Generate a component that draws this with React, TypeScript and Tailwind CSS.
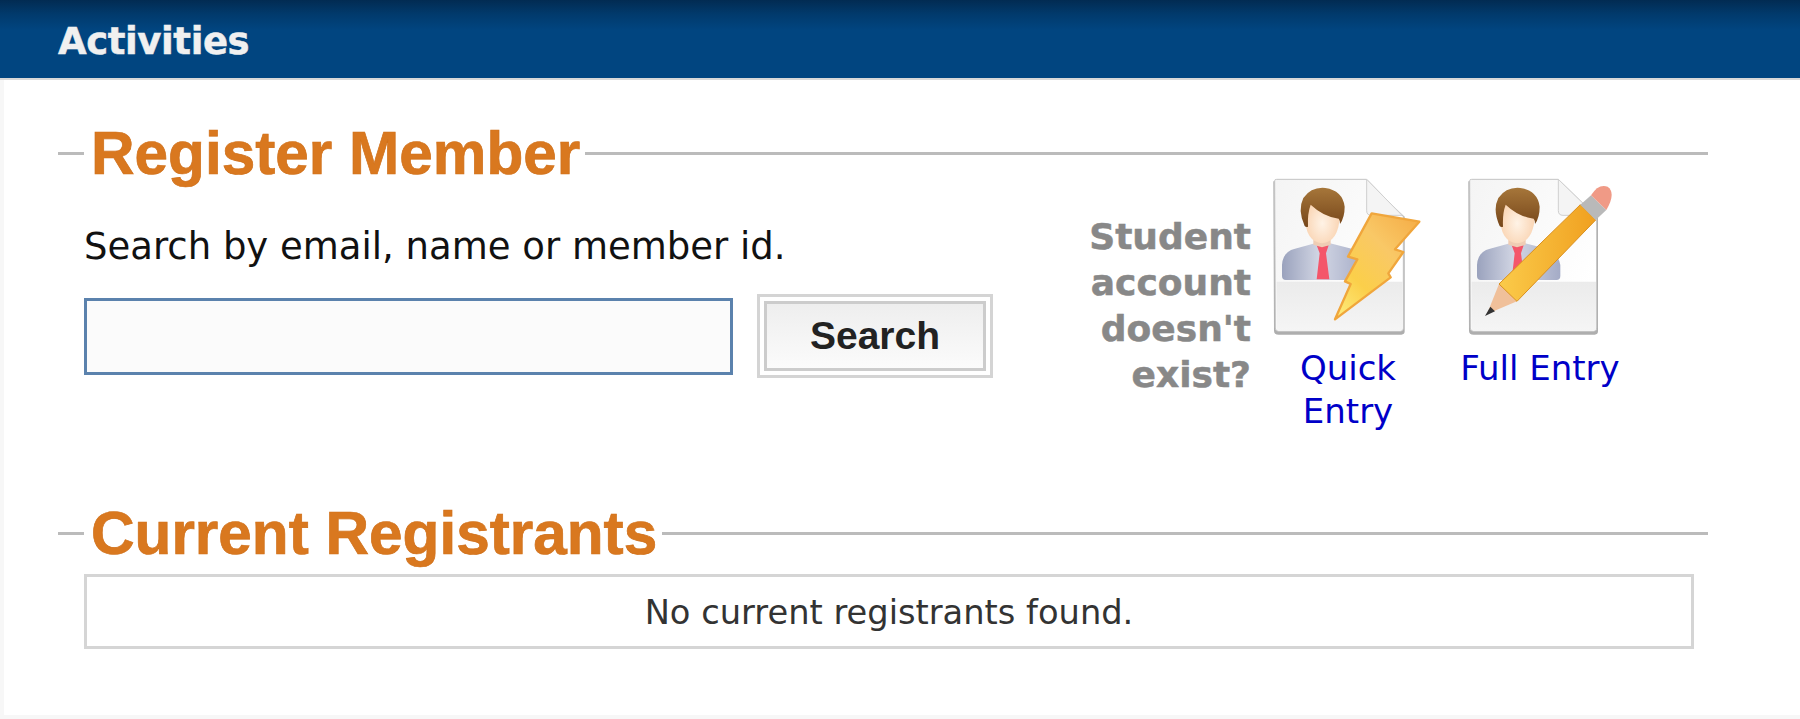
function SectionTitle({ title }: { title: string }) {
  return (
    <div className="flex items-center h-[60px]">
      <div className="w-[26px] h-[3px] bg-[#bbbbbb]" />
      <h2 className="pl-[7px] pr-[5px] text-[60.3px] leading-[60px] font-bold text-[#d9781f] [-webkit-text-stroke:0.7px_#d0701a] font-['Liberation_Sans',sans-serif] whitespace-nowrap">
        {title}
      </h2>
      <div className="flex-1 h-[3px] bg-[#bbbbbb]" />
    </div>
  );
}

function Person({ docRight, foldX }: { docRight: number; foldX: number }) {
  return (
    <>
      <path
        d={`M40 34H${foldX}L${docRight + 4} 140V484Q${docRight + 4} 494 ${docRight - 6} 494H56Q42 494 42 482Z`}
        fill="#8c8c8c"
        opacity="0.7"
      />
      <path
        d={`M44 32Q44 28 50 28H${foldX}L${docRight} 140V474Q${docRight} 484 ${docRight - 10} 484H56Q46 484 46 474Z`}
        fill="url(#sheet)"
        stroke="#c4c4c4"
        strokeWidth="3"
      />
      <path
        d={`M50 335H${docRight - 2}V474Q${docRight - 2} 482 ${docRight - 10} 482H58Q50 482 50 474Z`}
        fill="url(#lower)"
      />
      <path
        d={`M${foldX} 28V122Q${foldX} 136 ${foldX + 14} 136H${docRight - 4}Z`}
        fill="#f4f4f4"
        stroke="#cfcfcf"
        strokeWidth="3"
      />
      <path
        d="M66 318V285Q68 245 105 236L165 220H210L275 236Q308 245 316 285V318Q316 330 304 330H78Q66 330 66 318Z"
        fill="url(#suit)"
      />
      <path d="M170 226H206L198 250L208 328H170L179 250Z" fill="#f4566a" />
      <path d="M160 195H212V224L186 232L160 224Z" fill="#efcdb4" />
      <path d="M134 135Q136 216 186 220Q236 216 240 135Q238 70 186 70Q134 70 134 135Z" fill="url(#skin)" />
      <path
        d="M134 168Q112 120 130 84Q154 50 196 54Q248 62 254 110Q254 142 240 162Q240 150 236 146Q190 140 152 104Q142 130 144 170Q138 172 134 168Z"
        fill="url(#hair)"
      />
    </>
  );
}

function IconDefs() {
  return (
    <defs>
      <linearGradient id="sheet" x1="0" y1="0" x2="1" y2="0.6">
        <stop offset="0" stopColor="#f4f4f4" />
        <stop offset="1" stopColor="#ffffff" />
      </linearGradient>
      <linearGradient id="lower" x1="0" y1="0" x2="0" y2="1">
        <stop offset="0" stopColor="#ebebeb" />
        <stop offset="1" stopColor="#f5f5f5" />
      </linearGradient>
      <linearGradient id="suit" x1="0" y1="0" x2="1" y2="0">
        <stop offset="0" stopColor="#9aa2bd" />
        <stop offset="0.45" stopColor="#d2d6e4" />
        <stop offset="1" stopColor="#a4abc6" />
      </linearGradient>
      <radialGradient id="skin" cx="0.5" cy="0.6" r="0.65">
        <stop offset="0" stopColor="#fff3e6" />
        <stop offset="1" stopColor="#f8cba4" />
      </radialGradient>
      <linearGradient id="hair" x1="0" y1="0" x2="0" y2="1">
        <stop offset="0" stopColor="#a6763a" />
        <stop offset="1" stopColor="#76461a" />
      </linearGradient>
      <linearGradient id="bolt" x1="0.9" y1="0" x2="0.1" y2="1">
        <stop offset="0" stopColor="#f5ae48" />
        <stop offset="0.35" stopColor="#f9c866" />
        <stop offset="0.7" stopColor="#fbcf4a" />
        <stop offset="1" stopColor="#fdea7a" />
      </linearGradient>
      <linearGradient id="pencil" x1="0" y1="1" x2="1" y2="1">
        <stop offset="0" stopColor="#fbcb4a" />
        <stop offset="1" stopColor="#f0a020" />
      </linearGradient>
    </defs>
  );
}

function QuickIcon() {
  return (
    <svg width="170" height="170" viewBox="0 0 510 510" className="block blur-[0.5px]">
      <IconDefs />
      <Person docRight={430} foldX={320} />
      <path
        d="M335 130L478 155L405 238L430 246L385 310L392 322L225 448L272 342L255 334L292 268L264 260Z"
        fill="url(#bolt)"
        stroke="#f0a63c"
        strokeWidth="7"
        strokeLinejoin="round"
      />
    </svg>
  );
}

function FullIcon() {
  return (
    <svg width="170" height="170" viewBox="0 0 510 510" className="block blur-[0.5px]">
      <IconDefs />
      <Person docRight={425} foldX={310} />
      <path d="M96 432L132 342L186 394Z" fill="#f0c09a" />
      <path d="M90 438L106 410L120 424Z" fill="#333333" />
      <path d="M132 342L376 104L422 150L186 394Z" fill="url(#pencil)" stroke="#d98f1e" strokeWidth="3" />
      <path d="M376 104L408 76L454 120L422 150Z" fill="#b9b9b9" />
      <path d="M408 76Q430 40 458 50Q484 68 454 120Z" fill="#f09a86" />
    </svg>
  );
}

export default function App() {
  return (
    <div className="w-[1800px] h-[719px] bg-white overflow-hidden font-['DejaVu_Sans',sans-serif]">
      <header className="h-[80px] border-b-[2px] border-b-[#d8d8d8] bg-[linear-gradient(#022b52_0px,#013a6c_14px,#014580_30px,#014580_100%)] pl-[58px] flex items-start">
        <h1 className="text-[37px] leading-[83px] font-bold text-[#f0f0f0] tracking-[-0.4px] [-webkit-text-stroke:0.5px_#f0f0f0]">
          Activities
        </h1>
      </header>

      <main className="h-[639px] border-l-[4px] border-b-[4px] border-[#f7f7f7] pl-[54px] pr-[92px] pt-[43px]">
        <SectionTitle title="Register Member" />

        <div className="flex h-[333px] -mt-[13px]">
          <div className="w-[936px] pl-[26px] pt-[55px]">
            <p className="text-[37px] leading-[44px] text-[#111111]">Search by email, name or member id.</p>
            <div className="flex items-center mt-[25px]">
              <input
                type="text"
                className="w-[649px] h-[77px] border-[3px] border-[#5b82ad] bg-[#fbfbfb] outline-none"
              />
              <button className="ml-[24px] w-[236px] h-[84px] border-[3px] border-[#d4d4d4] p-[4px] bg-white">
                <span className="flex items-center justify-center w-full h-full border-[3px] border-[#cccccc] bg-[linear-gradient(#eeeeee,#fbfbfb)] font-['Liberation_Sans',sans-serif] font-bold text-[39px] text-[#222222]">
                  Search
                </span>
              </button>
            </div>
          </div>

          <div className="w-[266px] mt-[44px] text-right pr-[9px]">
            <p className="text-[36px] leading-[46px] font-bold text-[#888888] [-webkit-text-stroke:0.5px_#888888]">
              Student
              <br />
              account
              <br />
              doesn't
              <br />
              exist?
            </p>
          </div>

          <div className="flex items-start">
            <a href="#" className="block w-[170px] text-center text-[34px] leading-[43px] text-[#0000c8]">
              <QuickIcon />
              <span className="block mt-[7px] pl-[6px]">
                Quick
                <br />
                Entry
              </span>
            </a>
            <a href="#" className="block w-[170px] ml-[25px] whitespace-nowrap text-center text-[34px] leading-[43px] text-[#0000c8]">
              <FullIcon />
              <span className="block mt-[7px]">Full Entry</span>
            </a>
          </div>
        </div>

        <SectionTitle title="Current Registrants" />

        <div className="ml-[26px] mr-[14px] mt-[11px] h-[75px] pt-[4px] border-[3px] border-[#d5d5d5] flex items-center justify-center text-[33.7px] text-[#333333]">
          No current registrants found.
        </div>
      </main>
    </div>
  );
}
